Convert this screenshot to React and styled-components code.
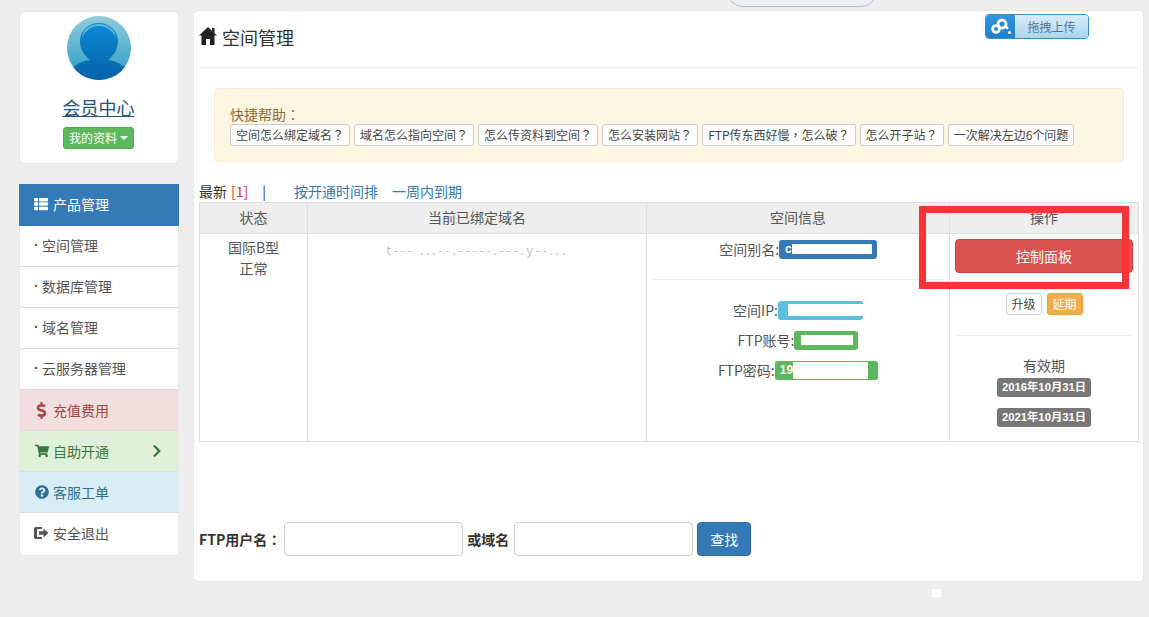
import React from "react";
import styled, { createGlobalStyle } from "styled-components";
import { FaThList, FaShoppingCart, FaQuestionCircle, FaChevronRight, FaDollarSign } from "react-icons/fa";

const Global = createGlobalStyle`
  html, body { margin: 0; padding: 0; background: #eeeeee; }
  body { font-family: "Noto Sans CJK SC", "Liberation Sans", sans-serif; font-size: 14px; color: #333; }
  * { box-sizing: border-box; }
`;
const Page = styled.div`
  position: relative; width: 1149px; height: 617px; overflow: hidden; background: #eee;
  display: flex; align-items: flex-start; gap: 15px; padding: 11px 5px 0 19px;
`;
const Sidebar = styled.aside`display: flex; flex-direction: column; width: 160px; flex: none;`;
const ProfileCard = styled.div`
  margin: 1px 1px 0; width: 158px; height: 151px; background: #fff; border-radius: 4px;
  box-shadow: 0 0 1px rgba(0,0,0,.25);
  display: flex; flex-direction: column; align-items: center; padding: 4px 1px 0 0;
`;
const Avatar = styled.svg`width: 64px; height: 64px; flex: none;`;
const MemberLink = styled.a`
  margin-top: 14px; font-size: 18px; line-height: 26px; color: #23527c; text-decoration: underline;
`;
const GreenButton = styled.button`
  margin-top: 7px; width: 71px; height: 22px; padding: 0; border: 1px solid #4cae4c; border-radius: 3px;
  background: #5cb85c; color: #fff; font: 12px/20px "Noto Sans CJK SC", sans-serif;
  display: flex; align-items: center; justify-content: center; gap: 3px;
`;
const Caret = styled.span`
  width: 0; height: 0; border-left: 4px solid transparent; border-right: 4px solid transparent; border-top: 4px solid #fff;
`;
const Menu = styled.nav`
  margin-top: 21px; display: flex; flex-direction: column; align-items: center;
`;
const MenuHead = styled.div`
  width: 160px; height: 42px; background: #337ab7; color: #fff; display: flex; align-items: center; gap: 5px; padding: 0 0 2px 15px;
  svg { font-size: 14px; }
`;
const MenuBody = styled.div`
  width: 158px; background: #fff; border-radius: 0 0 4px 4px; overflow: hidden; box-shadow: 0 0 1px rgba(0,0,0,.25);
`;
const tones = {
  plain: ["#fff", "#555"],
  danger: ["#f2dede", "#a94442"],
  success: ["#dff0d8", "#3c763d"],
  info: ["#d9edf7", "#31708f"],
};
const MenuRow = styled.div`
  height: 41px; display: flex; align-items: center; padding: 0 14px ${(p) => (p.$tone ? 0 : 2)}px 14px;
  background: ${(p) => tones[p.$tone || "plain"][0]}; color: ${(p) => tones[p.$tone || "plain"][1]};
  border-bottom: 1px solid #ddd;
  &:last-child { border-bottom: 0; height: 42px; }
  svg { flex: none; }
`;
const Dot = styled.span`
  width: 8px; font-family: "Liberation Sans", sans-serif; font-weight: 700;
`;
const IconSlot = styled.span`
  width: 15px; margin-right: 4px; display: flex; align-items: center; justify-content: center;
`;
const Push = styled.span`margin-left: auto; display: flex;`;
const Main = styled.main`
  width: 949px; height: 570px; flex: none; background: #fff; border-radius: 4px; box-shadow: 0 0 1px rgba(0,0,0,.25);
  padding: 0 4px 0 5px;
`;
const TitleBar = styled.header`
  height: 57px; border-bottom: 1px solid #eee; display: flex; align-items: flex-start; justify-content: space-between; padding-right: 50px;
`;
const Title = styled.h1`
  margin: 13px 0 0; font-size: 18px; font-weight: 400; line-height: 26px; color: #333; display: flex; align-items: center; gap: 5px;
`;
const HomeIcon = styled.svg`width: 18px; height: 18px; margin-top: -2px; flex: none;`;
const Upload = styled.div`
  margin-top: 3px; width: 104px; height: 25px; display: flex; border: 1px solid #3b8fcf; border-radius: 4px; overflow: hidden;
`;
const UploadIcon = styled.div`
  width: 29px; background: linear-gradient(#2f97e0, #1f7fcb); display: flex; align-items: center; justify-content: center;
`;
const UploadText = styled.div`
  flex: 1; background: linear-gradient(#dcecf8, #a9d4f3); color: #5b7488; font-size: 12px; line-height: 23px; text-align: center;
`;
const HelpBox = styled.section`
  margin: 20px 15px 0; height: 74px; background: #fdf6e3; border: 1px solid #faebcc; border-radius: 4px; padding: 15px 15px 0;
  color: #8a6d3b;
`;
const HelpLabel = styled.div`line-height: 20px;`;
const Punct = styled.span`font-family: "Noto Sans CJK TC", sans-serif;`;
const TagRow = styled.div`display: flex; gap: 4px; height: 22px;`;
const Tag = styled.a`
  height: 22px; padding: 0 5px; background: #fff; border: 1px solid #ccc; border-radius: 3px; color: #444;
  font-size: 12px; line-height: 20px; white-space: nowrap; display: block;
`;
const FilterBar = styled.div`
  margin-top: 20px; height: 20px; line-height: 18px; display: flex; color: #333;
`;
const Count = styled.span`color: #d9302c; margin-left: 4px;`;
const Sep = styled.span`margin: 0 28px 0 14px; color: #1f3a5a;`;
const FilterLink = styled.a`color: #337ab7; margin-right: 14px;`;
const Table = styled.table`
  width: 939px; border-collapse: collapse; table-layout: fixed; color: #555;
  th, td { border: 1px solid #ddd; text-align: center; font-weight: 400; padding: 0; vertical-align: top; }
  th { background: #eee; height: 31px; line-height: 29px; }
`;
const StatusCell = styled.td`padding-top: 3px !important; line-height: 21px;`;
const DomainCell = styled.td`padding-top: 6px !important; color: #bcc2ca; font-size: 13px; line-height: 20px; letter-spacing: 2.5px;`;
const InfoLine = styled.div`
  height: ${(p) => p.$h || 30}px; display: flex; justify-content: center; align-items: center; white-space: nowrap; color: #555;
`;
const SoftRule = styled.hr`margin: ${(p) => p.$m || "0 5px"}; border: 0; border-top: 1px solid #eee;`;
const badgeBg = { primary: "#337ab7", info: "#5bc0de", success: "#5cb85c", muted: "#777" };
const Badge = styled.span`
  display: inline-flex; align-items: center; height: 19px; border-radius: 3px; padding: 0 ${(p) => p.$pr ?? 5}px 0 ${(p) => p.$pl ?? 5}px;
  background: ${(p) => badgeBg[p.$tone]}; color: #fff; font: 700 12px/19px "Liberation Sans", "Noto Sans CJK SC", sans-serif; white-space: nowrap;
`;
const Redact = styled.span`display: block; background: #fff; height: ${(p) => p.$h || 10}px; width: ${(p) => p.$w}px;`;
const ControlButton = styled.button`
  display: block; margin: 5px 5px 0; width: 178px; height: 34px; border: 1px solid #d43f3a; border-radius: 4px; background: #d9534f; color: #fff;
  font: 14px/20px "Noto Sans CJK SC", sans-serif; padding: 0;
`;
const SmallRow = styled.div`margin-top: 20px; display: flex; justify-content: center; gap: 5px; height: 22px;`;
const SmallButton = styled.button`
  width: 36px; height: 22px; padding: 0; border-radius: 3px; font: 12px/20px "Noto Sans CJK SC", sans-serif;
  border: 1px solid ${(p) => (p.$warn ? "#eea236" : "#ccc")}; background: ${(p) => (p.$warn ? "#f0ad4e" : "#fff")}; color: ${(p) => (p.$warn ? "#fff" : "#444")};
`;
const Expire = styled.div`display: flex; flex-direction: column; align-items: center; padding-top: 19px; color: #555;`;
const ExpireLabel = styled.div`line-height: 20px;`;
const DateBadge = styled(Badge)`margin-top: ${(p) => p.$mt}px; padding: 0 5px; font-size: 11.3px;`;
const SearchBar = styled.form`margin-top: 80px; display: flex; align-items: center; height: 34px;`;
const SearchLabel = styled.label`font-weight: 700; color: #333; margin-right: ${(p) => p.$mr}px; white-space: nowrap;`;
const SearchInput = styled.input`
  width: 179px; height: 34px; border: 1px solid #ccc; border-radius: 4px; margin-right: 4px; background: #fff; padding: 0 12px;
`;
const SearchButton = styled.button`
  width: 54px; height: 34px; border: 1px solid #2e6da4; border-radius: 4px; background: #337ab7; color: #fff; padding: 0;
  font: 14px/20px "Noto Sans CJK SC", sans-serif;
`;
const TopPill = styled.div`
  position: absolute; left: 727px; top: -20px; width: 150px; height: 27px; background: #eef0f8; border: 1px solid #b9bcc8; border-radius: 0 0 16px 16px;
`;
const RedMark = styled.div`
  position: absolute; left: 919px; top: 206px; width: 210px; height: 83px; border: 7px solid #f93434;
`;
const WhiteDot = styled.div`position: absolute; left: 932px; top: 589px; width: 9px; height: 8px; background: #fff;`;

const LogoutIcon = () => (
  <svg width="15" height="14" viewBox="0 0 15 14" fill="#555">
    <path d="M1.800 1h6.200v2H3v8h5v2H1.800C.8 13 0 12.200 0 11.200V2.800C0 1.800.8 1 1.800 1z" />
    <path d="M5 5.200h4.500V2.600L14.500 7l-5 4.400V8.800H5z" />
  </svg>
);

export default function App() {
  return (
    <Page>
      <Global />
      <TopPill />
      <Sidebar>
        <ProfileCard>
          <Avatar viewBox="0 0 64 64">
            <defs>
              <linearGradient id="ring" x1="0" y1="0" x2="0" y2="1">
                <stop offset="0" stopColor="#8fcbd9" />
                <stop offset="1" stopColor="#2a9cc4" />
              </linearGradient>
              <linearGradient id="person" x1="0" y1="0" x2="0" y2="1">
                <stop offset="0" stopColor="#0b8ad6" />
                <stop offset="1" stopColor="#0560a8" />
              </linearGradient>
              <clipPath id="disc"><circle cx="32" cy="32" r="32" /></clipPath>
            </defs>
            <circle cx="32" cy="32" r="32" fill="url(#ring)" />
            <g clipPath="url(#disc)" fill="url(#person)">
              <path d="M32 7c10.500 0 19 8 19 18 0 9-5 15-10 19 8 1 16 5 22 12v10H1V56c6-7 14-11 22-12-5-4-10-10-10-19C13 15 21.500 7 32 7z" />
            </g>
            <path d="M15 22C16 13 23 8 32 8s16 5 17 14C46 15 40 10 32 10s-14 5-17 12z" fill="#6cc0e6" opacity=".8" />
          </Avatar>
          <MemberLink>会员中心</MemberLink>
          <GreenButton>我的资料<Caret /></GreenButton>
        </ProfileCard>
        <Menu>
          <MenuHead><FaThList />产品管理</MenuHead>
          <MenuBody>
            <MenuRow><Dot>·</Dot>空间管理</MenuRow>
            <MenuRow><Dot>·</Dot>数据库管理</MenuRow>
            <MenuRow><Dot>·</Dot>域名管理</MenuRow>
            <MenuRow><Dot>·</Dot>云服务器管理</MenuRow>
            <MenuRow $tone="danger"><IconSlot><FaDollarSign size={17} /></IconSlot>充值费用</MenuRow>
            <MenuRow $tone="success"><IconSlot><FaShoppingCart size={14} /></IconSlot>自助开通<Push><FaChevronRight size={14} /></Push></MenuRow>
            <MenuRow $tone="info"><IconSlot><FaQuestionCircle size={14} /></IconSlot>客服工单</MenuRow>
            <MenuRow><IconSlot><LogoutIcon /></IconSlot>安全退出</MenuRow>
          </MenuBody>
        </Menu>
      </Sidebar>
      <Main>
        <TitleBar>
          <Title>
            <HomeIcon viewBox="0 0 18 18" fill="#222">
              <path d="M9 0l9 8.500h-2.500V18H11v-6H7v6H2.500V8.500H0z" />
              <path d="M13 1h2.500v5.200L13 3.800z" />
            </HomeIcon>
            空间管理
          </Title>
          <Upload>
            <UploadIcon>
              <svg width="24" height="19" viewBox="0 0 24 19" fill="none" stroke="#fff">
                <circle cx="7" cy="12" r="3.400" strokeWidth="2.800" />
                <circle cx="13" cy="7" r="4" strokeWidth="2.800" />
                <path d="M16.500 9.500l2.500 2" strokeWidth="2.400" />
                <circle cx="20.500" cy="15.500" r="1.500" fill="#fff" stroke="none" />
              </svg>
            </UploadIcon>
            <UploadText>拖拽上传</UploadText>
          </Upload>
        </TitleBar>
        <HelpBox>
          <HelpLabel>快捷帮助<Punct>：</Punct></HelpLabel>
          <TagRow>
            <Tag>空间怎么绑定域名<Punct>？</Punct></Tag>
            <Tag>域名怎么指向空间<Punct>？</Punct></Tag>
            <Tag>怎么传资料到空间<Punct>？</Punct></Tag>
            <Tag>怎么安装网站<Punct>？</Punct></Tag>
            <Tag>FTP传东西好慢<Punct>，</Punct>怎么破<Punct>？</Punct></Tag>
            <Tag>怎么开子站<Punct>？</Punct></Tag>
            <Tag>一次解决左边6个问题</Tag>
          </TagRow>
        </HelpBox>
        <FilterBar>
          最新<Count>[1]</Count><Sep>|</Sep>
          <FilterLink>按开通时间排</FilterLink><FilterLink>一周内到期</FilterLink>
        </FilterBar>
        <Table>
          <colgroup>
            <col style={{ width: 108 }} />
            <col style={{ width: 339 }} />
            <col style={{ width: 303 }} />
            <col style={{ width: 189 }} />
          </colgroup>
          <thead>
            <tr><th>状态</th><th>当前已绑定域名</th><th>空间信息</th><th>操作</th></tr>
          </thead>
          <tbody>
            <tr style={{ height: 208 }}>
              <StatusCell>国际B型<br />正常</StatusCell>
              <DomainCell>t--- ...--.-----.---.y--...</DomainCell>
              <td>
                <InfoLine $h={30}>空间别名:<Badge $tone="primary" $pl={6} $pr={5}>c<Redact $w={80} /></Badge></InfoLine>
                <InfoLine $h={15} />
                <SoftRule />
                <InfoLine $h={15} />
                <InfoLine>空间IP:<Badge $tone="info" $pl={10} $pr={0}><Redact $w={75} $h={12} /></Badge></InfoLine>
                <InfoLine>FTP账号:<Badge $tone="success" $pl={7} $pr={5}><Redact $w={52} /></Badge></InfoLine>
                <InfoLine>FTP密码:<Badge $tone="success" $pl={5} $pr={10}>19<Redact $w={75} $h={17} /></Badge></InfoLine>
              </td>
              <td>
                <ControlButton>控制面板</ControlButton>
                <SmallRow>
                  <SmallButton>升级</SmallButton>
                  <SmallButton $warn>延期</SmallButton>
                </SmallRow>
                <SoftRule $m="20px 5px 0" />
                <Expire>
                  <ExpireLabel>有效期</ExpireLabel>
                  <DateBadge $tone="muted" $mt={3}>2016年10月31日</DateBadge>
                  <DateBadge $tone="muted" $mt={11}>2021年10月31日</DateBadge>
                </Expire>
              </td>
            </tr>
          </tbody>
        </Table>
        <SearchBar>
          <SearchLabel $mr={3}>FTP用户名<Punct>：</Punct></SearchLabel>
          <SearchInput />
          <SearchLabel $mr={5}>或域名</SearchLabel>
          <SearchInput />
          <SearchButton type="button">查找</SearchButton>
        </SearchBar>
      </Main>
      <RedMark />
      <WhiteDot />
    </Page>
  );
}
